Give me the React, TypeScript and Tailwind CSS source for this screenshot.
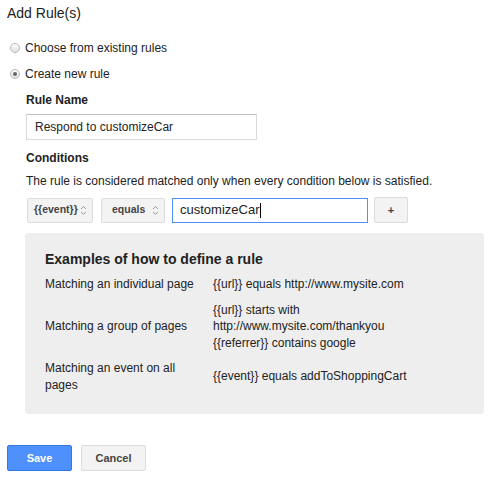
import React from "react";

function Radio({ checked }: { checked?: boolean }) {
  return (
    <span className="w-[10px] h-[10px] rounded-full border border-[#b8b8b8] bg-gradient-to-b from-[#fdfdfd] to-[#e2e2e2] flex items-center justify-center">
      {checked && <span className="w-[4px] h-[4px] rounded-full bg-[#666]" />}
    </span>
  );
}

function Chevrons() {
  return (
    <svg width="7" height="11" viewBox="0 0 7 11" className="shrink-0">
      <path d="M1 4 L3.5 1.5 L6 4" fill="none" stroke="#999" strokeWidth="1" />
      <path d="M1 7 L3.5 9.5 L6 7" fill="none" stroke="#999" strokeWidth="1" />
    </svg>
  );
}

function Select({ label, w, pl }: { label: string; w: string; pl: string }) {
  return (
    <div
      className={`${w} ${pl} h-[25px] border border-[#dcdcdc] bg-[#f3f3f3] rounded-[2px] flex items-center justify-between pr-[5px] text-[10.5px] font-bold text-[#444]`}
    >
      <span>{label}</span>
      <Chevrons />
    </div>
  );
}

export default function App() {
  return (
    <div className="w-[493px] h-[479px] bg-white text-[12px] text-[#222] font-['Liberation_Sans',Arial,sans-serif] relative overflow-hidden">
      <div className="pt-[3px] pl-[7px] text-[14px] leading-[20px] text-[#222]">Add Rule(s)</div>

      <div className="mt-[17px] pl-[10px] flex items-center gap-[5px] h-[16px] leading-[16px]">
        <Radio />
        <span>Choose from existing rules</span>
      </div>
      <div className="mt-[10px] pl-[10px] flex items-center gap-[5px] h-[16px] leading-[16px]">
        <Radio checked />
        <span>Create new rule</span>
      </div>

      <div className="pl-[26px]">
        <div className="mt-[10px] font-bold leading-[16px]">Rule Name</div>
        <div className="mt-[6px] w-[231px] h-[26px] border border-[#d9d9d9] border-t-[#c0c0c0] flex items-center pl-[8px] text-[12px]">
          Respond to customizeCar
        </div>

        <div className="mt-[10px] font-bold leading-[16px]">Conditions</div>
        <div className="mt-[7px] leading-[16px]">
          The rule is considered matched only when every condition below is satisfied.
        </div>

        <div className="mt-[8px] flex items-center">
          <div className="ml-[1px]">
            <Select label="{{event}}" w="w-[66px]" pl="pl-[6px]" />
          </div>
          <div className="ml-[8px]">
            <Select label="equals" w="w-[64px]" pl="pl-[10px]" />
          </div>
          <div className="ml-[7px] w-[196px] h-[25px] border border-[#4d90fe] flex items-center pl-[7px] text-[13px]">
            customizeCar<span className="w-[1px] h-[15px] bg-black ml-[1px]" />
          </div>
          <div className="ml-[6px] w-[34px] h-[26px] border border-[#dcdcdc] bg-[#f3f3f3] rounded-[2px] flex items-center justify-center text-[11px] font-bold text-[#444]">
            +
          </div>
        </div>
      </div>

      <div className="mt-[10px] ml-[25px] w-[459px] h-[181px] bg-[#eeeeee] rounded-[3px] pt-[17px] pl-[20px]">
        <div className="text-[14px] font-bold leading-[18px]">Examples of how to define a rule</div>
        <div className="mt-[8px] grid grid-cols-[168px_1fr] gap-y-[9px] items-center text-[12px] leading-[16.5px] text-[#222]">
          <div>Matching an individual page</div>
          <div>{"{{url}} equals http://www.mysite.com"}</div>
          <div>Matching a group of pages</div>
          <div>
            <div>{"{{url}} starts with"}</div>
            <div>http://www.mysite.com/thankyou</div>
            <div>{"{{referrer}} contains google"}</div>
          </div>
          <div className="w-[140px]">Matching an event on all pages</div>
          <div>{"{{event}} equals addToShoppingCart"}</div>
        </div>
      </div>

      <div className="mt-[31px] ml-[7px] flex gap-[9px]">
        <div className="w-[65px] h-[26px] bg-[#4d90fe] border border-[#3079ed] rounded-[2px] flex items-center justify-center text-white text-[11px] font-bold">
          Save
        </div>
        <div className="w-[65px] h-[26px] bg-[#f3f3f3] border border-[#dcdcdc] rounded-[2px] flex items-center justify-center text-[#444] text-[11px] font-bold">
          Cancel
        </div>
      </div>
    </div>
  );
}
